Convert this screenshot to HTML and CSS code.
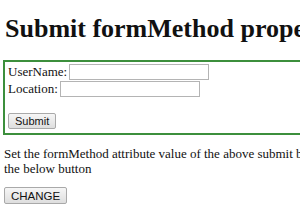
FILE: index.html
```html
<!doctype html>
<html lang="en">
    <head>
        <meta charset="UTF-8" />
        <title>Submit formMethod property</title>
        <link rel="stylesheet" href="styles.css">
    </head>
    <body>
        <h1 class="title">Submit formMethod property</h1>

        <form id="info" class="box" action="/Sample.php" method="get">
            <div class="row">
                <label for="uname">UserName:</label>
                <input type="text" id="uname" name="uname" class="field">
            </div>
            <div class="row">
                <label for="loc">Location:</label>
                <input type="text" id="loc" name="loc" class="field">
            </div>
            <div class="actions">
                <button type="submit" id="sub" class="btn" formmethod="post">Submit</button>
            </div>
        </form>

        <p class="note">Set the formMethod attribute value of the above submit button by clicking on the below button</p>
        <button type="button" class="btn change" id="change">CHANGE</button>
    </body>
</html>
```

FILE: styles.css
```css
html,
body {
    margin: 0;
    padding: 0;
    background: #fff;
}

body {
    padding-left: 3px;
    font-family: "Liberation Serif", "Times New Roman", serif;
    font-size: 13px;
    color: #111;
    overflow: hidden;
    width: 480px;
}

.title {
    font-size: 26px;
    font-weight: bold;
    margin: 14px 0 0 2px;
    line-height: 30px;
    white-space: nowrap;
}

.box {
    width: 330px;
    margin-top: 16px;
    border: 2px solid #3c8f3c;
    padding: 2px 2px 4px 3px;
}

.row {
    display: flex;
    align-items: center;
    gap: 2px;
    height: 16px;
    margin-bottom: 1px;
}

.field {
    width: 140px;
    height: 16px;
    box-sizing: border-box;
    border: 1px solid #b4b4b4;
    padding: 0;
    margin: 0;
    background: #fff;
}

.actions {
    padding-top: 15px;
}

.btn {
    font-family: "Liberation Sans", Arial, sans-serif;
    font-size: 11px;
    color: #111;
    height: 16px;
    padding: 0 6px;
    margin: 0;
    border: 1px solid #a9a9a9;
    border-radius: 2px;
    background: linear-gradient(#f6f6f6, #dedede);
    line-height: 14px;
}

.note {
    margin: 11px 0 0 1px;
    line-height: 15px;
    width: 420px;
}

.change {
    margin: 11px 0 0 1px;
    height: 17px;
    padding: 0 6px;
    font-size: 11.5px;
}
```
